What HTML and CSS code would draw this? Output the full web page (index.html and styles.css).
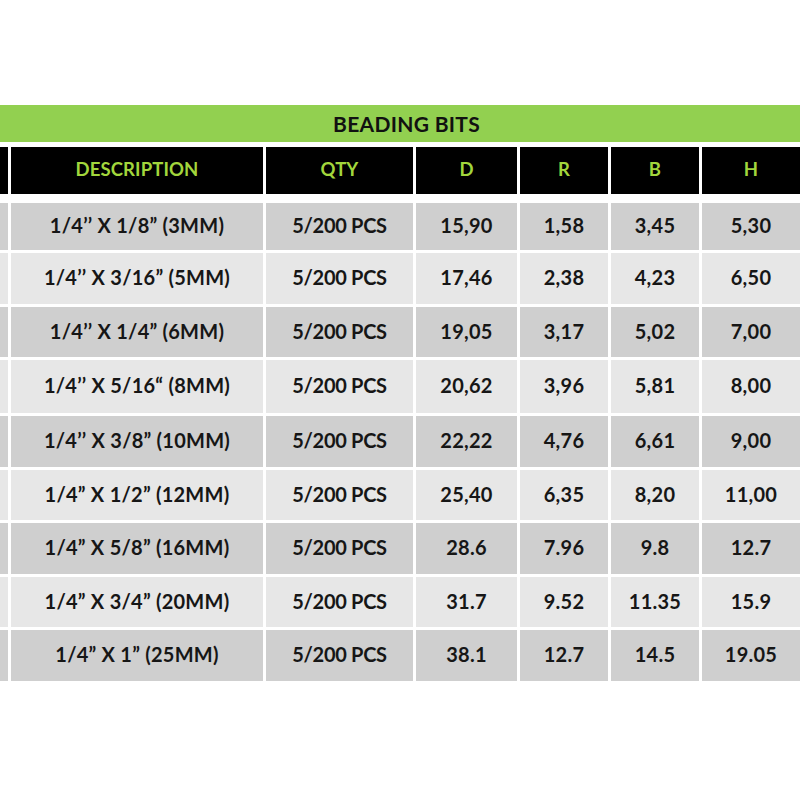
FILE: index.html
```html
<!DOCTYPE html>
<html>
<head>
<meta charset="utf-8">
<link rel="stylesheet" href="styles.css">
</head>
<body>
<div class="sheet">
  <div class="title">BEADING BITS</div>
  <div class="grid head">
    <div class="cell"></div>
    <div class="cell">DESCRIPTION</div>
    <div class="cell">QTY</div>
    <div class="cell">D</div>
    <div class="cell">R</div>
    <div class="cell">B</div>
    <div class="cell">H</div>
  </div>
  <div class="grid body">
    <div class="cell dark"></div><div class="cell dark">1/4’’ X 1/8” (3MM)</div><div class="cell dark qty">5/200 PCS</div><div class="cell dark">15,90</div><div class="cell dark">1,58</div><div class="cell dark">3,45</div><div class="cell dark">5,30</div>
    <div class="cell light"></div><div class="cell light">1/4’’ X 3/16” (5MM)</div><div class="cell light qty">5/200 PCS</div><div class="cell light">17,46</div><div class="cell light">2,38</div><div class="cell light">4,23</div><div class="cell light">6,50</div>
    <div class="cell dark"></div><div class="cell dark">1/4’’ X 1/4” (6MM)</div><div class="cell dark qty">5/200 PCS</div><div class="cell dark">19,05</div><div class="cell dark">3,17</div><div class="cell dark">5,02</div><div class="cell dark">7,00</div>
    <div class="cell light"></div><div class="cell light">1/4’’ X 5/16“ (8MM)</div><div class="cell light qty">5/200 PCS</div><div class="cell light">20,62</div><div class="cell light">3,96</div><div class="cell light">5,81</div><div class="cell light">8,00</div>
    <div class="cell dark"></div><div class="cell dark">1/4’’ X 3/8” (10MM)</div><div class="cell dark qty">5/200 PCS</div><div class="cell dark">22,22</div><div class="cell dark">4,76</div><div class="cell dark">6,61</div><div class="cell dark">9,00</div>
    <div class="cell light"></div><div class="cell light">1/4” X 1/2” (12MM)</div><div class="cell light qty">5/200 PCS</div><div class="cell light">25,40</div><div class="cell light">6,35</div><div class="cell light">8,20</div><div class="cell light">11,00</div>
    <div class="cell dark"></div><div class="cell dark">1/4” X 5/8” (16MM)</div><div class="cell dark qty">5/200 PCS</div><div class="cell dark">28.6</div><div class="cell dark">7.96</div><div class="cell dark">9.8</div><div class="cell dark">12.7</div>
    <div class="cell light"></div><div class="cell light">1/4” X 3/4” (20MM)</div><div class="cell light qty">5/200 PCS</div><div class="cell light">31.7</div><div class="cell light">9.52</div><div class="cell light">11.35</div><div class="cell light">15.9</div>
    <div class="cell dark"></div><div class="cell dark">1/4” X 1” (25MM)</div><div class="cell dark qty">5/200 PCS</div><div class="cell dark">38.1</div><div class="cell dark">12.7</div><div class="cell dark">14.5</div><div class="cell dark">19.05</div>
  </div>
</div>
</body>
</html>
```

FILE: styles.css
```css
html, body {
  margin: 0;
  padding: 0;
  background: #ffffff;
}
body {
  width: 800px;
  height: 800px;
  overflow: hidden;
  font-family: "Lato", "Liberation Sans", sans-serif;
  font-weight: 700;
  color: #161616;
}
.sheet {
  padding-top: 105px;
}
.title {
  height: 37px;
  background: #92d050;
  display: flex;
  align-items: center;
  justify-content: center;
  padding-left: 13px;
  font-size: 21px;
  letter-spacing: 0.3px;
  color: #111;
  margin-bottom: 5px;
}
.grid {
  display: grid;
  grid-template-columns: 8px 252px 147px 101px 88px 88px 98px;
  column-gap: 3px;
}
.head {
  grid-template-rows: 47px;
  margin-bottom: 9px;
}
.head .cell {
  background: #000;
  color: #a2d63c;
  font-size: 18.5px;
  letter-spacing: 0.1px;
}
.body {
  grid-template-rows: 47px 51px 50px 53px 51px 50px 51px 50px 51px;
  row-gap: 3px;
}
.cell {
  display: flex;
  align-items: center;
  justify-content: center;
  font-size: 20px;
  letter-spacing: 0.25px;
  white-space: nowrap;
  padding-bottom: 3px;
  box-sizing: border-box;
}
.qty {
  letter-spacing: -0.3px;
}
.dark {
  background: #cfcfcf;
}
.light {
  background: #e7e7e7;
}
```
